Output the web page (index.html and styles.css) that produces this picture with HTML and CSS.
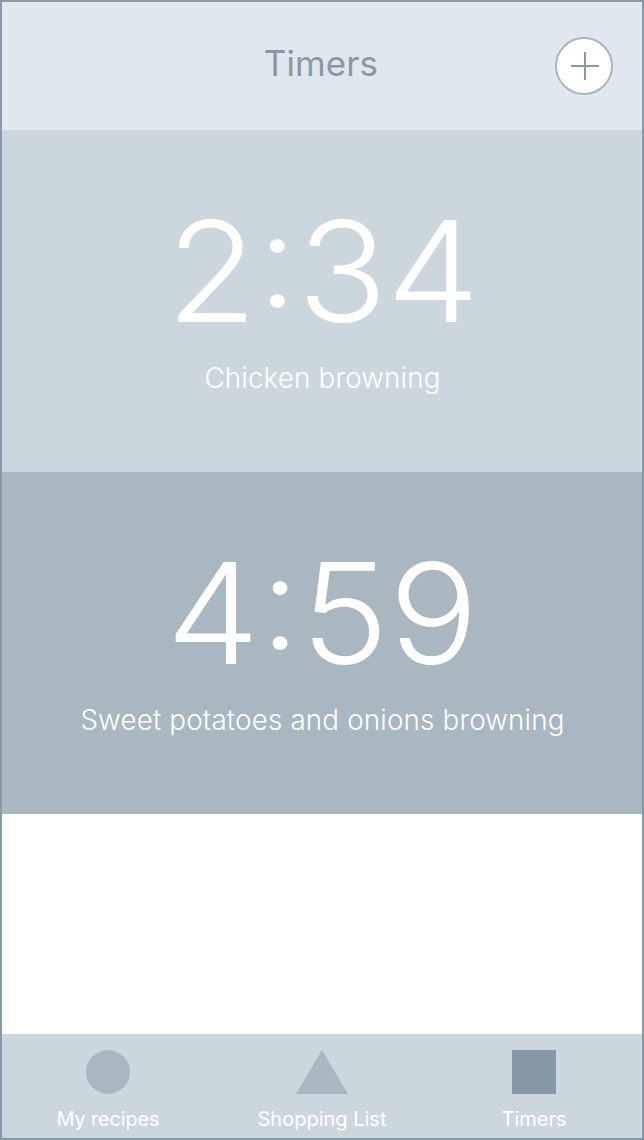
FILE: index.html
```html
<!DOCTYPE html>
<html lang="en">
<head>
<meta charset="utf-8">
<title>Timers</title>
<link rel="stylesheet" href="styles.css">
</head>
<body>
<div class="app">
  <header class="header">
    <h1 class="title">Timers</h1>
    <button class="add" aria-label="Add timer"><svg width="30" height="28" viewBox="0 0 30 28"><path d="M16 0v28M2 14h28"/></svg></button>
  </header>
  <main class="timers">
    <section class="timer light">
      <div class="time"><span>2</span><span class="colon">:</span><span>34</span></div>
      <div class="label">Chicken browning</div>
    </section>
    <section class="timer dark">
      <div class="time"><span>4</span><span class="colon">:</span><span>59</span></div>
      <div class="label">Sweet potatoes and onions browning</div>
    </section>
  </main>
  <nav class="tabs">
    <a class="tab"><svg class="icon" width="44" height="44" viewBox="0 0 44 44"><circle cx="22" cy="22" r="22"/></svg><span>My recipes</span></a>
    <a class="tab"><svg class="icon" width="52" height="44" viewBox="0 0 52 44"><path d="M26 0 52 44H0z"/></svg><span>Shopping List</span></a>
    <a class="tab active"><svg class="icon" width="44" height="44" viewBox="0 0 44 44"><path d="M0 0h44v44H0z"/></svg><span>Timers</span></a>
  </nav>
</div>
</body>
</html>
```
FILE: styles.css
```css
* { box-sizing: border-box; }
body { margin: 0; font-family: Inter, "Liberation Sans", sans-serif; }
.app { width: 644px; height: 1140px; border: 2px solid #8799a4; background: #fff; display: flex; flex-direction: column; overflow: hidden; }
.header { height: 128px; flex: none; background: #e0e7ed; display: grid; grid-template-columns: 1fr auto 1fr; align-items: center; padding: 0 29px; }
.title { grid-column: 2; margin: 0; padding: 0 2px 6px 0; font-size: 35px; line-height: 44px; font-weight: 400; color: #8799a4; letter-spacing: .1px; }
.add { justify-self: end; width: 58px; height: 58px; padding: 0; border: 2px solid #a9b7c0; border-radius: 50%; background: #fff; display: flex; align-items: center; justify-content: center; }
.add path { stroke: #8799a4; stroke-width: 2; }
.timers { flex: 1; }
.timer { height: 342px; display: flex; flex-direction: column; align-items: center; color: #fff; padding-top: 55px; }
.light { background: #ccd7dd; }
.dark { background: #a9b7c0; }
.time { display: flex; height: 173px; line-height: 172px; font-size: 140px; font-weight: 300; transform: scaleX(1.06); }
.light .time span:last-child { letter-spacing: -1px; }
.colon { width: 38px; display: flex; justify-content: center; font-size: 131px; line-height: 149px; font-weight: 350; }
.dark .colon { width: 39px; }
.label { height: 40px; line-height: 40px; font-size: 27.8px; font-weight: 300; white-space: nowrap; letter-spacing: .15px; padding-left: 1px; }
.tabs { height: 104px; flex: none; background: #ccd7dd; display: flex; }
.tab { flex: 0 0 216px; display: flex; flex-direction: column; align-items: center; padding-top: 16px; color: #fff; font-size: 20px; line-height: 24px; }
.tab:first-child { flex-basis: 212px; font-size: 19.6px; }
.tab:last-child { flex-basis: 208px; }
.tab span { margin-top: 13px; }
.icon { fill: #a9b7c0; }
.active .icon { fill: #8799a4; }
```
